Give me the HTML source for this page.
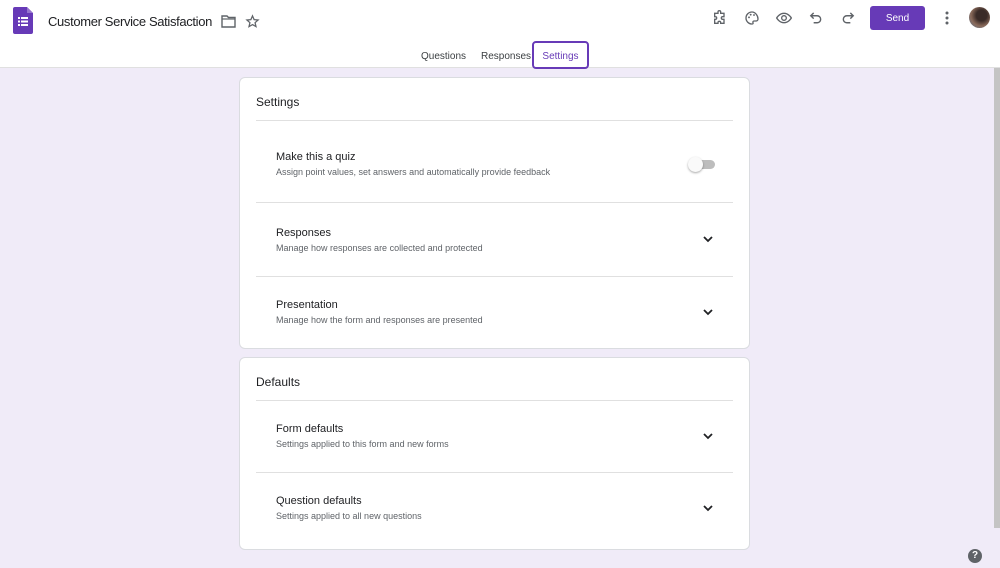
<!DOCTYPE html>
<html><head><meta charset="utf-8"><style>
*{margin:0;padding:0;box-sizing:border-box}
body{width:1000px;height:568px;overflow:hidden;background:#f0ebf8;font-family:"Liberation Sans",Arial,sans-serif;position:relative;color:#202124}
.top{position:absolute;left:0;top:0;width:1000px;height:68px;background:#fff;border-bottom:1px solid #e0e0e0}
.abs{position:absolute}
.title{left:48px;top:14px;font-size:13px;color:#202124;letter-spacing:-0.35px}
.tabs span{position:absolute;top:51px;font-size:10px;color:#3c4043}
.settab{left:532px;top:41px;width:57px;height:28px;border:2px solid #673ab7;border-radius:4px;color:#673ab7;font-size:10px;text-align:center;padding-top:8px}
.send{left:870px;top:6px;width:55px;height:24px;background:#673ab7;border-radius:3px;color:#fff;font-size:10px;text-align:center;padding-top:7px}
.card{position:absolute;left:239px;width:511px;background:#fff;border:1px solid #dadce0;border-radius:6px}
.h{position:absolute;left:16px;font-size:12px;color:#202124}
.sep{position:absolute;left:16px;right:16px;height:1px;background:#e0e0e0}
.it{position:absolute;left:36px}
.it b{display:block;font-weight:normal;font-size:11px;color:#202124}
.it i{display:block;font-style:normal;font-size:9px;color:#5f6368;margin-top:4px}
.chev{position:absolute;left:463px}
.sb{left:994px;top:68px;width:6px;height:460px;background:#c4c4c4}
</style></head><body>
<div class="top"></div>
<svg class="abs" style="left:13px;top:7px" width="20" height="27" viewBox="0 0 20 27"><path d="M2 0h12l6 6v19a2 2 0 0 1-2 2H2a2 2 0 0 1-2-2V2a2 2 0 0 1 2-2z" fill="#673ab7"/><path d="M14 0v6h6z" fill="#9575cd"/><g fill="#fff"><rect x="5" y="10" width="2" height="2"/><rect x="8" y="10" width="7" height="2"/><rect x="5" y="13.5" width="2" height="2"/><rect x="8" y="13.5" width="7" height="2"/><rect x="5" y="17" width="2" height="2"/><rect x="8" y="17" width="7" height="2"/></g></svg>
<div class="abs title">Customer Service Satisfaction</div>
<svg class="abs" style="left:221px;top:15px" width="15" height="13" viewBox="0 0 15 13"><path d="M1 1h5l1.5 1.5H14v9.5H1z" fill="none" stroke="#5f6368" stroke-width="1.4"/><path d="M1 4h13" stroke="#5f6368" stroke-width="1.2"/></svg>
<svg class="abs" style="left:245px;top:14px" width="15" height="15" viewBox="0 0 24 24"><path d="M12 3l2.6 6 6.4.6-4.9 4.3 1.5 6.3L12 16.9 6.4 20.2l1.5-6.3L3 9.6l6.4-.6z" fill="none" stroke="#5f6368" stroke-width="2"/></svg>
<svg class="abs" style="left:712px;top:10px" width="16" height="16" viewBox="0 0 24 24"><path d="M9 3a2 2 0 0 1 4 0v2h5v5h-2a2 2 0 0 0 0 4h2v6h-5v-1a2 2 0 0 0-4 0v1H4v-6h1a2 2 0 0 0 0-4H4V5h5z" fill="none" stroke="#5f6368" stroke-width="2"/></svg>
<svg class="abs" style="left:744px;top:10px" width="16" height="16" viewBox="0 0 24 24"><path d="M12 3a9 9 0 0 0 0 18c1.5 0 2-1 1.5-2-.6-1.2.2-2.5 1.5-2.5H18a3 3 0 0 0 3-3c0-5-4-10.5-9-10.5z" fill="none" stroke="#5f6368" stroke-width="2"/><circle cx="7.5" cy="11" r="1.4" fill="#5f6368"/><circle cx="10" cy="7" r="1.4" fill="#5f6368"/><circle cx="15" cy="7.5" r="1.4" fill="#5f6368"/></svg>
<svg class="abs" style="left:775px;top:10px" width="18" height="16" viewBox="0 0 24 24"><path d="M1 12s4-7 11-7 11 7 11 7-4 7-11 7S1 12 1 12z" fill="none" stroke="#5f6368" stroke-width="2"/><circle cx="12" cy="12" r="3.5" fill="none" stroke="#5f6368" stroke-width="2"/></svg>
<svg class="abs" style="left:809px;top:10px" width="14" height="15" viewBox="0 0 24 24"><path d="M8 4L3 9l5 5" fill="none" stroke="#5f6368" stroke-width="2.4"/><path d="M3 9h11a6 6 0 0 1 0 12H8" fill="none" stroke="#5f6368" stroke-width="2.4"/></svg>
<svg class="abs" style="left:841px;top:10px" width="14" height="15" viewBox="0 0 24 24"><path d="M16 4l5 5-5 5" fill="none" stroke="#5f6368" stroke-width="2.4"/><path d="M21 9H10a6 6 0 0 0 0 12h6" fill="none" stroke="#5f6368" stroke-width="2.4"/></svg>
<div class="abs send">Send</div>
<svg class="abs" style="left:944px;top:11px" width="6" height="15"><circle cx="3" cy="2" r="1.5" fill="#5f6368"/><circle cx="3" cy="7" r="1.5" fill="#5f6368"/><circle cx="3" cy="12" r="1.5" fill="#5f6368"/></svg>
<div class="abs" style="left:969px;top:7px;width:21px;height:21px;border-radius:50%;background:radial-gradient(circle at 60% 40%,#3a2b28 30%,#8a6a5a 60%,#5a7a9a)"></div>
<div class="tabs"><span style="left:421px">Questions</span><span style="left:481px">Responses</span></div>
<div class="abs settab">Settings</div>

<div class="card" style="top:77px;height:272px">
 <div class="h" style="top:17px">Settings</div>
 <div class="sep" style="top:42px"></div>
 <div class="it" style="top:73px"><b>Make this a quiz</b><i>Assign point values, set answers and automatically provide feedback</i></div>
 <div class="abs" style="left:451px;top:82px;width:24px;height:9px;border-radius:5px;background:#bdbdbd"></div>
 <div class="abs" style="left:448px;top:79px;width:15px;height:15px;border-radius:50%;background:#fafafa;box-shadow:0 1px 2px rgba(0,0,0,.35)"></div>
 <div class="sep" style="top:124px"></div>
 <div class="it" style="top:149px"><b>Responses</b><i>Manage how responses are collected and protected</i></div>
 <svg class="chev" style="top:158px" width="10" height="7"><path d="M1 1l4 4 4-4" fill="none" stroke="#202124" stroke-width="1.8"/></svg>
 <div class="sep" style="top:198px"></div>
 <div class="it" style="top:221px"><b>Presentation</b><i>Manage how the form and responses are presented</i></div>
 <svg class="chev" style="top:231px" width="10" height="7"><path d="M1 1l4 4 4-4" fill="none" stroke="#202124" stroke-width="1.8"/></svg>
</div>

<div class="card" style="top:357px;height:193px">
 <div class="h" style="top:17px">Defaults</div>
 <div class="sep" style="top:42px"></div>
 <div class="it" style="top:65px"><b>Form defaults</b><i>Settings applied to this form and new forms</i></div>
 <svg class="chev" style="top:75px" width="10" height="7"><path d="M1 1l4 4 4-4" fill="none" stroke="#202124" stroke-width="1.8"/></svg>
 <div class="sep" style="top:114px"></div>
 <div class="it" style="top:137px"><b>Question defaults</b><i>Settings applied to all new questions</i></div>
 <svg class="chev" style="top:147px" width="10" height="7"><path d="M1 1l4 4 4-4" fill="none" stroke="#202124" stroke-width="1.8"/></svg>
</div>

<div class="abs sb"></div>
<div class="abs" style="left:968px;top:549px;width:14px;height:14px;border-radius:50%;background:#5f6368;color:#fff;font-size:10px;font-weight:bold;text-align:center;line-height:14px">?</div>
</body></html>
